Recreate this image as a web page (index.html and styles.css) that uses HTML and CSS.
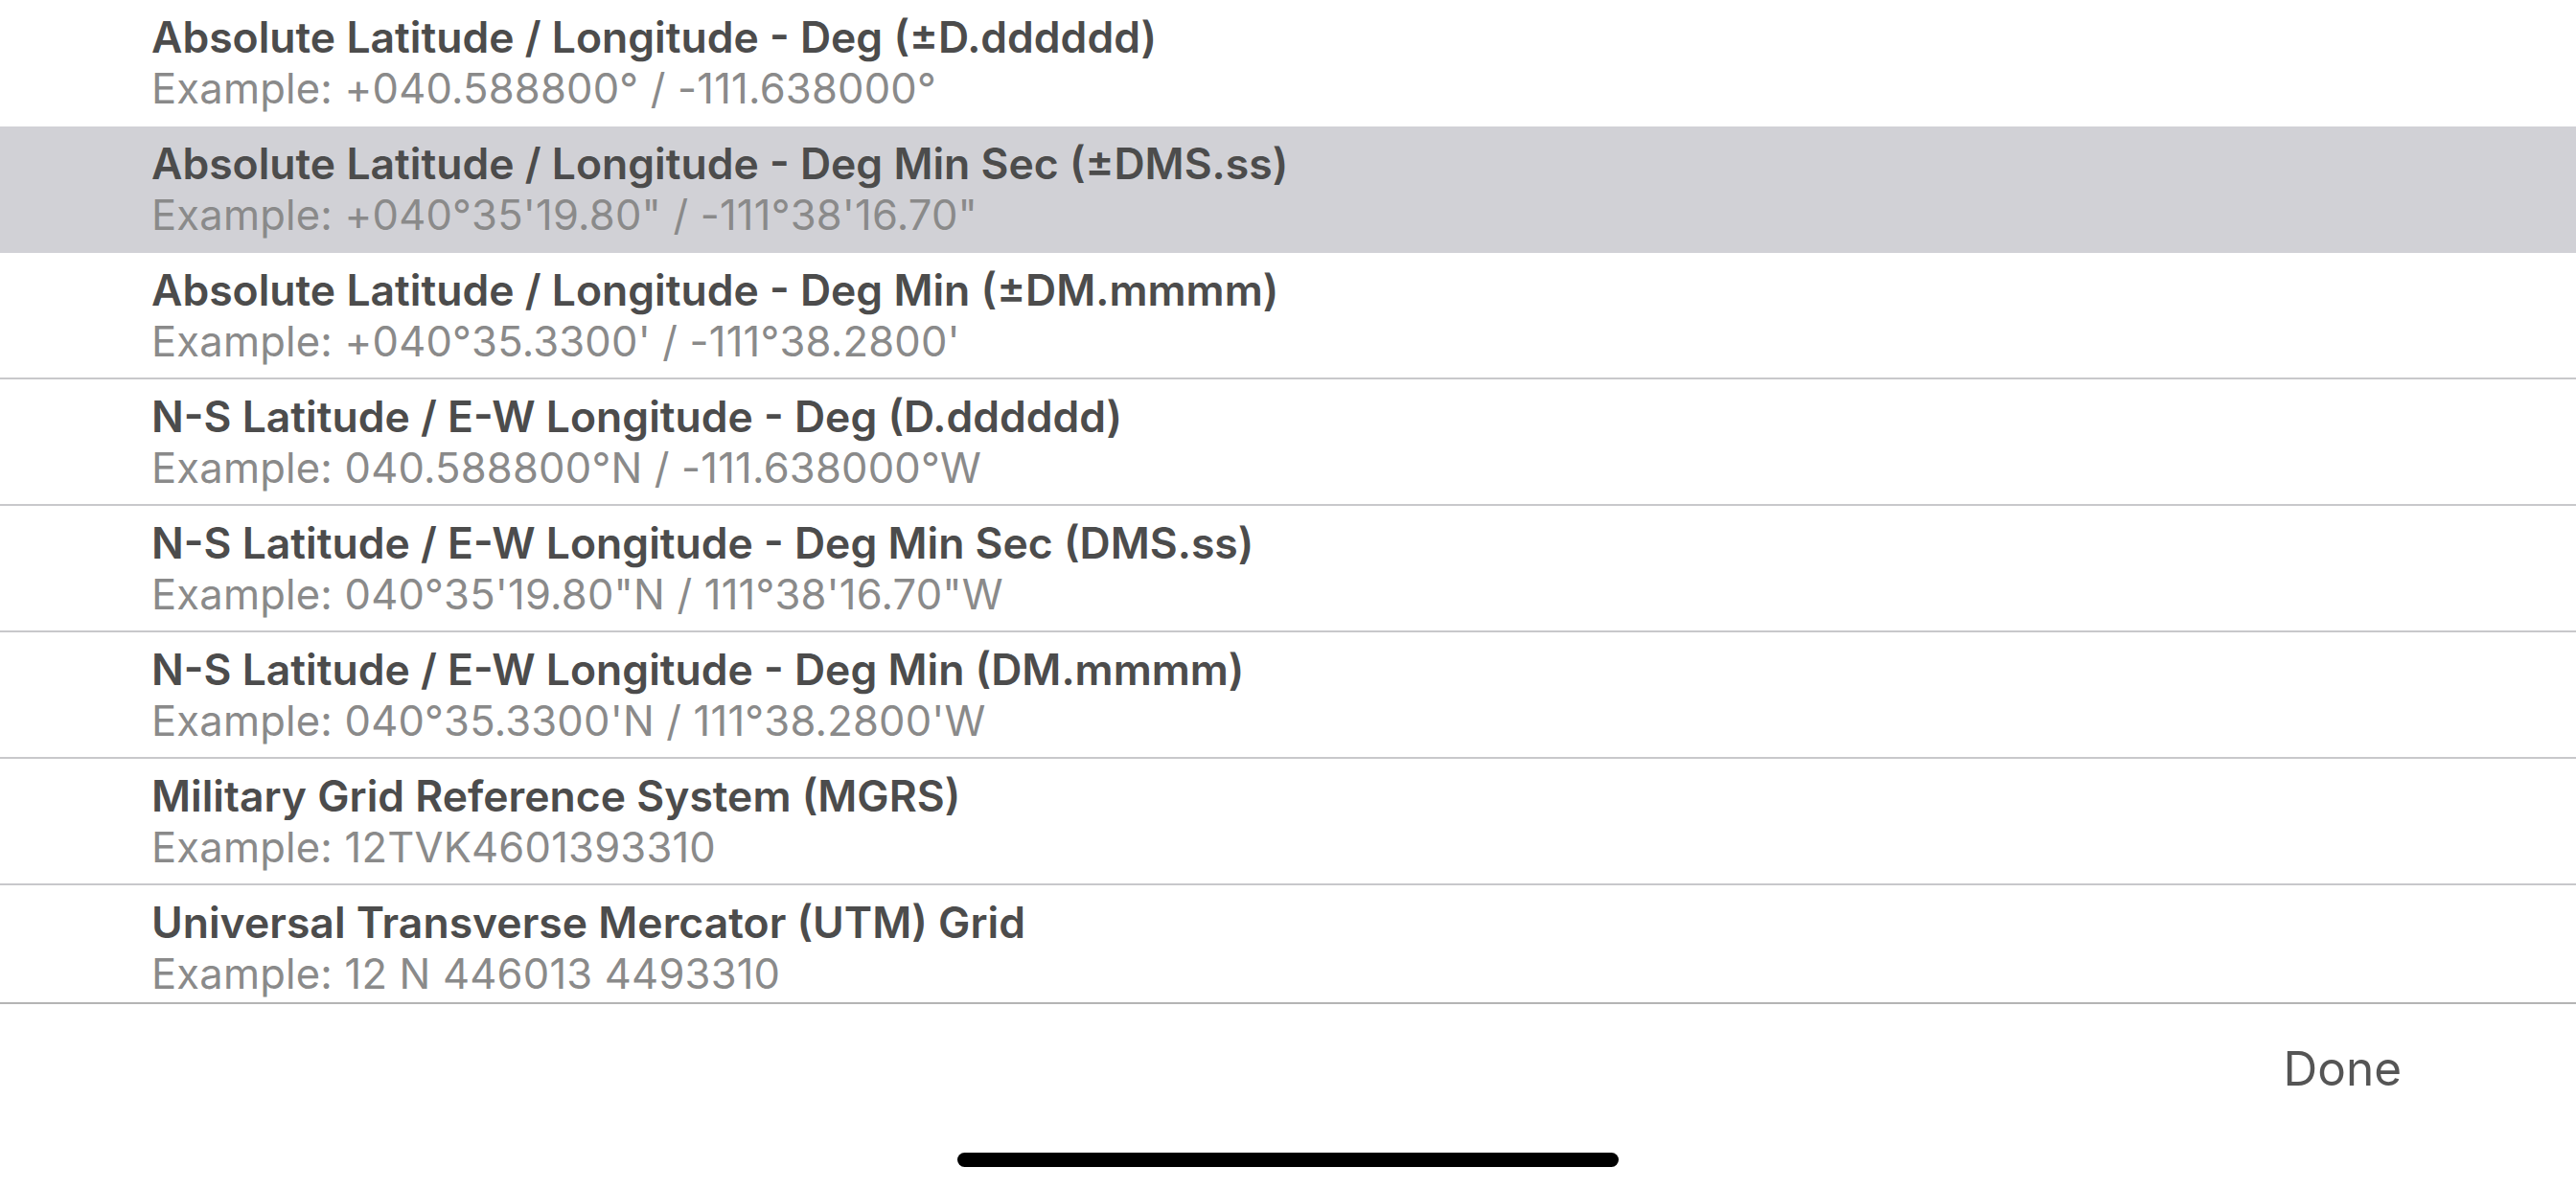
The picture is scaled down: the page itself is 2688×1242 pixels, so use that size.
FILE: index.html
```html
<!DOCTYPE html>
<html>
<head>
<meta charset="utf-8">
<link rel="stylesheet" href="styles.css">
</head>
<body>
<div class="screen">
  <div class="list">
    <div class="row no-sep">
      <div class="title">Absolute Latitude / Longitude - Deg (±D.dddddd)</div>
      <div class="sub">Example: +040.588800° / -111.638000°</div>
    </div>
    <div class="row selected">
      <div class="title">Absolute Latitude / Longitude - Deg Min Sec (±DMS.ss)</div>
      <div class="sub">Example: +040°35'19.80" / -111°38'16.70"</div>
    </div>
    <div class="row">
      <div class="title">Absolute Latitude / Longitude - Deg Min (±DM.mmmm)</div>
      <div class="sub">Example: +040°35.3300' / -111°38.2800'</div>
    </div>
    <div class="row">
      <div class="title">N-S Latitude / E-W Longitude - Deg (D.dddddd)</div>
      <div class="sub">Example: 040.588800°N / -111.638000°W</div>
    </div>
    <div class="row">
      <div class="title">N-S Latitude / E-W Longitude - Deg Min Sec (DMS.ss)</div>
      <div class="sub">Example: 040°35'19.80"N / 111°38'16.70"W</div>
    </div>
    <div class="row">
      <div class="title">N-S Latitude / E-W Longitude - Deg Min (DM.mmmm)</div>
      <div class="sub">Example: 040°35.3300'N / 111°38.2800'W</div>
    </div>
    <div class="row">
      <div class="title">Military Grid Reference System (MGRS)</div>
      <div class="sub">Example: 12TVK4601393310</div>
    </div>
    <div class="row">
      <div class="title">Universal Transverse Mercator (UTM) Grid</div>
      <div class="sub">Example: 12 N 446013 4493310</div>
    </div>
  </div>
  <div class="toolbar">
    <div class="done">Done</div>
  </div>
  <div class="home-indicator"></div>
</div>
</body>
</html>
```

FILE: styles.css
```css
html, body {
  margin: 0;
  padding: 0;
  background: #ffffff;
}

.screen {
  position: relative;
  width: 2688px;
  height: 1242px;
  overflow: hidden;
  display: flex;
  flex-direction: column;
  font-family: Inter, "Noto Sans", "Liberation Sans", sans-serif;
}

.list {
  height: 1046px;
  overflow: hidden;
  flex: none;
}

.row {
  box-sizing: border-box;
  height: 132px;
  padding: 12px 0 0 158px;
  border-bottom: 2px solid #c8c8cb;
}

.row.no-sep {
  border-bottom-color: transparent;
}

.row.selected {
  background: #d1d1d6;
  border-bottom-color: #d1d1d6;
}

.title {
  font-size: 44.5px;
  line-height: 54px;
  font-weight: 600;
  color: #4c4c4c;
  white-space: nowrap;
}

.sub {
  font-size: 43.5px;
  line-height: 52px;
  font-weight: 400;
  letter-spacing: 0.2px;
  color: #8a8a8a;
  white-space: nowrap;
}

.toolbar {
  flex: 1;
  border-top: 2px solid #b4b4b4;
  display: flex;
  justify-content: flex-end;
  align-items: flex-start;
  padding: 37px 182px 0 0;
}

.done {
  font-size: 49.5px;
  line-height: 60px;
  color: #555555;
}

.home-indicator {
  position: absolute;
  left: 999px;
  top: 1203px;
  width: 690px;
  height: 15px;
  border-radius: 8px;
  background: #000000;
}
```
